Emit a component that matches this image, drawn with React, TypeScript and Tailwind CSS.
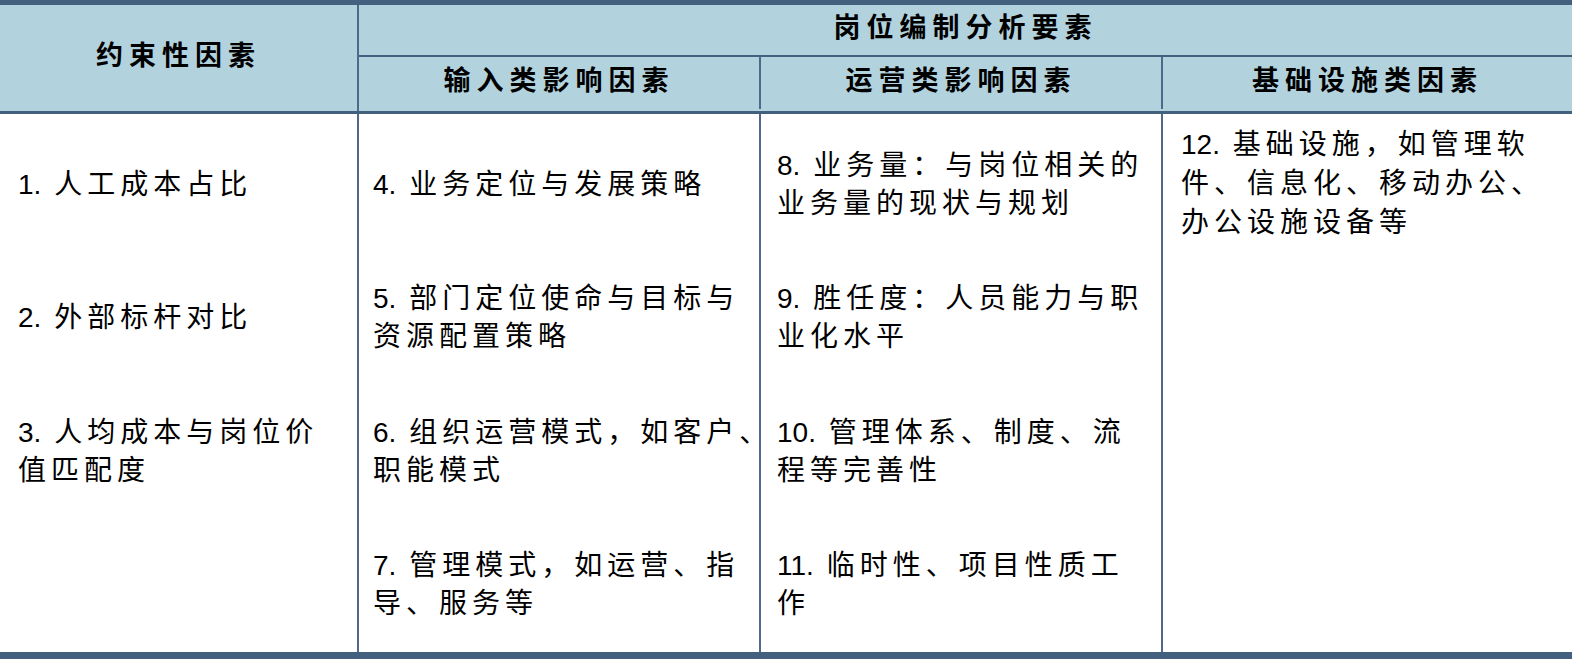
import React from "react";

const font = { fontFamily: '"Liberation Sans", "Noto Sans CJK SC", sans-serif' };

// each body column holds up to 4 equal slots; text centred vertically in each slot
const input: string[][] = [
  ["4. 业务定位与发展策略"],
  ["5. 部门定位使命与目标与", "资源配置策略"],
  ["6. 组织运营模式，如客户、", "职能模式"],
  ["7. 管理模式，如运营、指", "导、服务等"],
];

const ops: string[][] = [
  ["8. 业务量：与岗位相关的", "业务量的现状与规划"],
  ["9. 胜任度：人员能力与职", "业化水平"],
  ["10. 管理体系、制度、流", "程等完善性"],
  ["11. 临时性、项目性质工", "作"],
];

const limits: string[][] = [
  ["1. 人工成本占比"],
  ["2. 外部标杆对比"],
  ["3. 人均成本与岗位价", "值匹配度"],
  [],
];

// numbers keep normal spacing, the chinese text gets the wide tracking
function Line({ text, className }: { text: string; className?: string }) {
  const m = text.match(/^(\d+\.)(.*)$/);
  return (
    <div className={`whitespace-nowrap ${className ?? "leading-[38px]"}`}>
      {m ? (
        <>
          <span className="tracking-normal">{m[1]}</span>
          {m[2]}
        </>
      ) : (
        text
      )}
    </div>
  );
}

function Column({ slots, className }: { slots: string[][]; className: string }) {
  return (
    <div className={`flex flex-col ${className}`}>
      {slots.map((s, i) => (
        <div key={i} className="flex-1 flex flex-col justify-center">
          {s.map((l) => (
            <Line key={l} text={l} />
          ))}
        </div>
      ))}
    </div>
  );
}

export default function App() {
  return (
    <div className="bg-white w-[1575px] h-[659px] text-black" style={font}>
      <div className="w-[1572px] border-t-[5px] border-b-[7px] border-[#44607f]">
        {/* header */}
        <div className="flex bg-[#b2d2de] border-b-[3px] border-[#44607f] font-bold text-[27px] tracking-[6px]">
          <div className="w-[359px] h-[106px] border-r-2 border-[#51688a] flex items-center justify-center pb-1">
            约束性因素
          </div>
          <div className="flex-1 flex flex-col">
            <div className="h-[52px] border-b-2 border-[#44607f] flex items-center justify-center pb-1">
              岗位编制分析要素
            </div>
            <div className="h-[52px] flex">
              <div className="w-[402px] border-r-2 border-[#51688a] flex items-center justify-center pb-1">
                输入类影响因素
              </div>
              <div className="w-[402px] border-r-2 border-[#51688a] flex items-center justify-center pb-1">
                运营类影响因素
              </div>
              <div className="flex-1 flex items-center justify-center pb-1">
                基础设施类因素
              </div>
            </div>
          </div>
        </div>

        {/* body */}
        <div className="flex h-[538px] text-[28px] tracking-[5px]">
          <Column slots={limits} className="w-[359px] border-r-2 border-[#51688a] pl-[18px] pt-1" />
          <Column slots={input} className="w-[402px] border-r-2 border-[#51688a] pl-[14px] pt-1" />
          <Column slots={ops} className="w-[402px] border-r-2 border-[#51688a] pl-[16px] pt-1" />
          <div className="flex-1 pl-[18px] pt-[11px]">
            {["12. 基础设施，如管理软", "件、信息化、移动办公、", "办公设施设备等"].map((l) => (
              <Line key={l} text={l} className="leading-[39px]" />
            ))}
          </div>
        </div>
      </div>
    </div>
  );
}
